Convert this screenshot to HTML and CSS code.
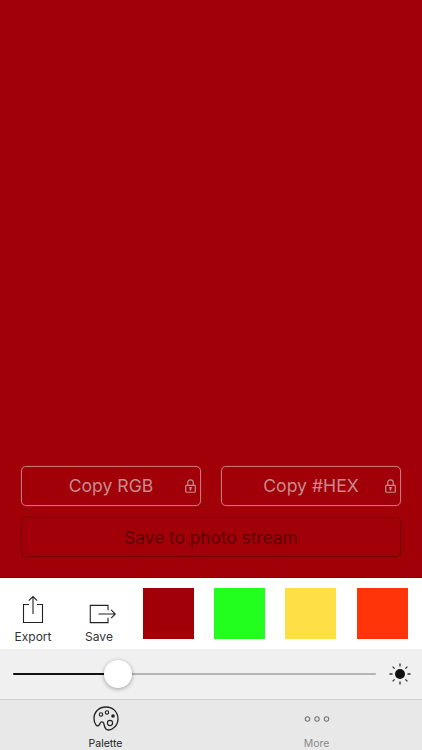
FILE: index.html
```html
<!DOCTYPE html>
<html lang="en">
<head>
<meta charset="utf-8">
<title>Palette</title>
<link rel="stylesheet" href="styles.css">
</head>
<body>
<div class="app">
  <main class="stage">
    <div class="copy-row">
      <button class="btn light">Copy RGB
        <svg class="lock" viewBox="0 0 12 15"><path d="M3 7V3.800a3 3 0 0 1 6 0V7" fill="none" stroke="currentColor" stroke-width="1.300"/><rect x=".8" y="6.800" width="10.400" height="7.500" rx=".8" fill="none" stroke="currentColor" stroke-width="1.300"/><rect x="5.200" y="9" width="1.600" height="3.400" fill="currentColor"/><rect x="4.300" y="8.800" width="3.400" height="1.300" fill="currentColor"/></svg>
      </button>
      <button class="btn light">Copy #HEX
        <svg class="lock" viewBox="0 0 12 15"><path d="M3 7V3.800a3 3 0 0 1 6 0V7" fill="none" stroke="currentColor" stroke-width="1.300"/><rect x=".8" y="6.800" width="10.400" height="7.500" rx=".8" fill="none" stroke="currentColor" stroke-width="1.300"/><rect x="5.200" y="9" width="1.600" height="3.400" fill="currentColor"/><rect x="4.300" y="8.800" width="3.400" height="1.300" fill="currentColor"/></svg>
      </button>
    </div>
    <button class="btn dark">Save to photo stream</button>
  </main>
  <section class="tools">
    <div class="tool export">
      <svg viewBox="0 0 22 29" width="22" height="29"><path d="M7 9.500H1.500v18h19v-18H15M11 19V1.500M6.800 5.700 11 1.500l4.200 4.200" fill="none" stroke="#222" stroke-width="1.100"/></svg>
      <span>Export</span>
    </div>
    <div class="tool save">
      <svg viewBox="0 0 30 22" width="30" height="22"><path d="M20.500 7V1.500H1v19h19.500V15M10 11h18.500M24 6.500l4.500 4.500-4.500 4.500" fill="none" stroke="#222" stroke-width="1.200"/></svg>
      <span>Save</span>
    </div>
    <div class="swatches">
      <div class="swatch red"></div>
      <div class="swatch green"></div>
      <div class="swatch yellow"></div>
      <div class="swatch orange"></div>
    </div>
  </section>
  <section class="slider-row">
    <div class="track">
      <div class="fill"></div>
      <div class="thumb"></div>
    </div>
    <svg class="sun" viewBox="0 0 22 22" width="22" height="22">
      <circle cx="11" cy="11" r="5" fill="#111"/>
      <path d="M11 .5v3M11 18.500v3M.5 11h3M18.500 11h3M3.600 3.600l2 2M16.400 16.400l2 2M3.600 18.400l2-2M16.400 5.600l2-2" stroke="#333" stroke-width="1.300"/>
    </svg>
  </section>
  <nav class="tabs">
    <div class="tab active">
      <svg viewBox="0 0 26 26" width="26" height="26"><path d="M13 1C6 1 1 6 1 12.500c0 2.500 .8 4.800 2 6.500 1.500 1.800 3.500 .5 4-1.500 .6-2 2.800-2.300 3.600-.5 .8 2 .6 4 2.400 6 1.800 1.500 4.500 1 6.500-.2C23 20.500 25 17 25 13 25 6 20 1 13 1z" fill="none" stroke="#222" stroke-width="1.300"/><circle cx="8" cy="8.500" r="1.700" fill="none" stroke="#222" stroke-width="1.100"/><circle cx="14" cy="6.500" r="1.700" fill="none" stroke="#222" stroke-width="1.100"/><circle cx="20" cy="10" r="1.800" fill="#222"/><circle cx="17" cy="17" r="2.600" fill="none" stroke="#222" stroke-width="1.100"/></svg>
      <span>Palette</span>
    </div>
    <div class="tab">
      <svg viewBox="0 0 26 26" width="26" height="26"><circle cx="3.500" cy="13" r="2.200" fill="none" stroke="#777" stroke-width="1.100"/><circle cx="13" cy="13" r="2.200" fill="none" stroke="#777" stroke-width="1.100"/><circle cx="22.500" cy="13" r="2.200" fill="none" stroke="#777" stroke-width="1.100"/></svg>
      <span>More</span>
    </div>
  </nav>
</div>
</body>
</html>
```
FILE: styles.css
```css
* { box-sizing: border-box; }
html, body { margin: 0; padding: 0; }
body { font-family: "Inter", "Liberation Sans", sans-serif; }
.app { width: 422px; height: 750px; display: flex; flex-direction: column; overflow: hidden; }
.stage {
  height: 578px; background: #a10008; padding: 466px 21px 0;
  display: flex; flex-direction: column; gap: 11px;
  border-bottom: 1px solid #8a0006;
}
.copy-row { display: flex; gap: 20px; }
.btn {
  position: relative; height: 40px; background: transparent; border-radius: 5px;
  font-family: inherit; font-size: 17.600px; padding: 0;
}
.btn.light { flex: 1; border: 1px solid #c7747a; color: #c98a8e; padding-bottom: 1px; box-shadow: 0 0 1px #c7747a; }
.btn.dark { flex: none; width: 380px; font-size: 17.300px; border: 1px solid #6f0005; color: #5a0004; box-shadow: 0 0 1px #6f0005; }
.lock { position: absolute; right: 4px; top: 12px; width: 11px; height: 14px; color: #c98a8e; }
.tools { height: 71px; background: #fff; position: relative; display: flex; }
.tool { display: flex; flex-direction: column; align-items: center; font-size: 12px; color: #333; }
.tool span { position: absolute; top: 51px; line-height: 16px; }
.tool svg { position: absolute; }
.export { width: 66px; }
.export svg { top: 17px; }
.save { width: 66px; }
.save svg { top: 26px; margin-left: 7px; width: 28px; height: 20px; }
.swatches { margin-left: 11px; padding-top: 10px; display: flex; gap: 20.200px; }
.swatch { width: 51px; height: 51px; }
.red { background: #a10008; }
.green { background: #22ff1e; }
.yellow { background: #ffdf46; }
.orange { background: #ff3408; }
.slider-row {
  height: 50px; background: #f0f0f0; display: flex; align-items: center;
  padding: 0 11px 0 13px; gap: 13px;
}
.track { position: relative; width: 363px; height: 2px; background: #b4b4b4; border-radius: 1px; }
.fill { width: 105px; height: 2px; background: #111; border-radius: 1px; }
.thumb {
  position: absolute; left: 91px; top: -13px; width: 28px; height: 28px; border-radius: 50%;
  background: #fff; box-shadow: 0 1px 4px rgba(0,0,0,.35);
}
.tabs { height: 51px; background: #e8e8e8; border-top: 1px solid #cfcfcf; display: flex; }
.tab {
  flex: 1; display: flex; flex-direction: column; align-items: center;
  padding-top: 6px; font-size: 10.500px; color: #888; gap: 5px;
}
.tab span { line-height: 13px; }
.tab.active { color: #222; }
```
